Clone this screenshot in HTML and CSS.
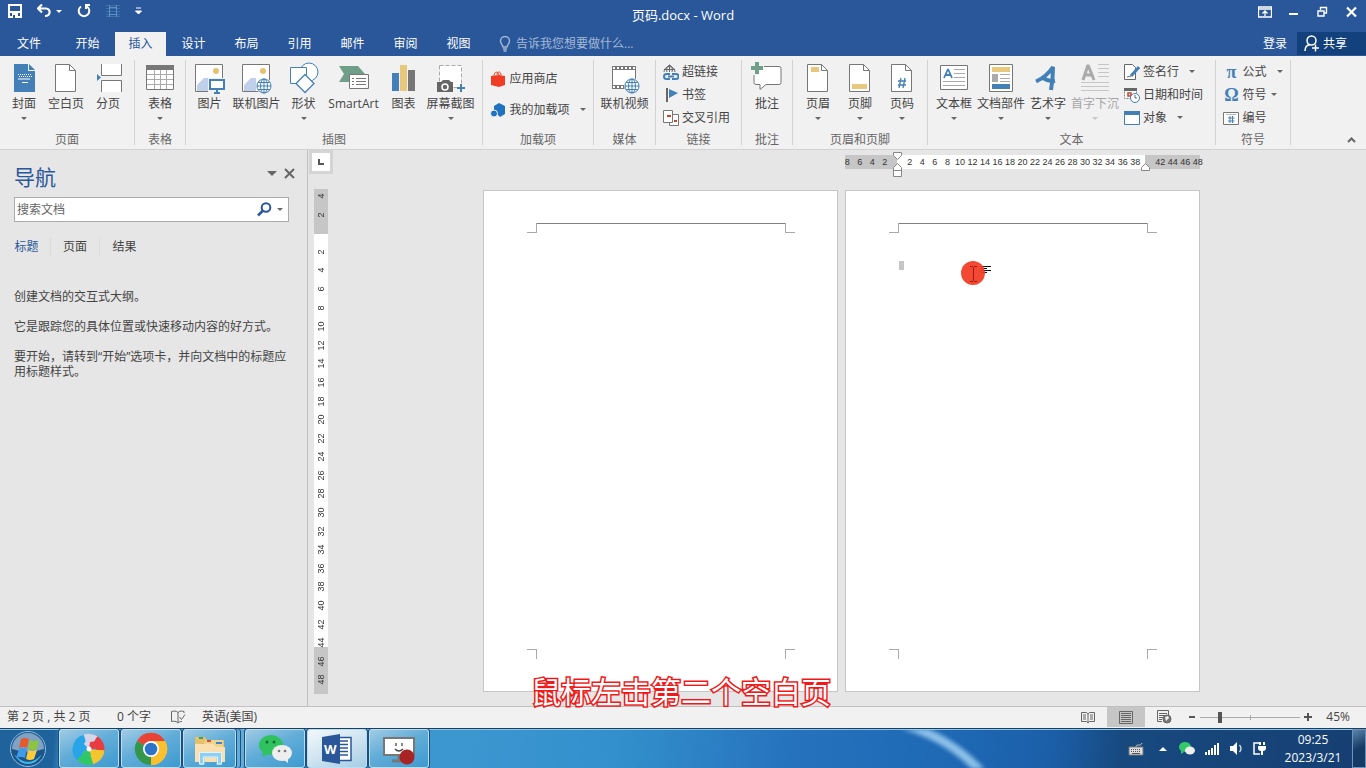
FILE: index.html
```html
<!DOCTYPE html>
<html lang="zh-CN">
<head>
    <meta charset="UTF-8">
    <meta name="viewport" content="width=device-width, initial-scale=1.0">
    <title>页码.docx - Word</title>
    <link rel="stylesheet" href="styles.css">
</head>
<body>
    <header class="titlebar">
        <div class="quick">
            <button aria-label="保存"><svg width="14" height="14" viewBox="0 0 14 14"><path d="M1 1h12v12H1zM1 8h12" fill="none" stroke="#fff" stroke-width="2"/><path d="M4 9h6v5H4z" fill="#fff"/><path d="M5 11h2v3H5z" fill="#2a579a"/></svg></button>
            <button class="undo" aria-label="撤消"><svg width="14" height="14" viewBox="0 0 14 14"><path d="M1 4.500h8c5 0 5 7.500-1 7.500M5 .5l-4 4 4 4" fill="none" stroke="#fff" stroke-width="2.200"/></svg><i class="caret"></i></button>
            <button aria-label="恢复"><svg width="14" height="14" viewBox="0 0 14 14"><path d="M4 2.500a5.300 5.300 0 1 0 6 0M8 1h5M9 0v5" fill="none" stroke="#fff" stroke-width="2"/></svg></button>
            <button aria-label="表格"><svg width="14" height="14" viewBox="0 0 14 14"><path d="M0 1.500h14M0 12.500h14M0 4.500h14M0 7.500h14M0 10.500h14" fill="none" stroke="#3f70a8"/><path d="M3.500 1v12M10.500 1v12M3 3.500h8M3 10.500h8" fill="none" stroke="#5c94c4"/></svg></button>
            <button aria-label="自定义"><svg width="7" height="8" viewBox="0 0 7 8"><path d="M1 1h5M.5 4h6l-3 3z" fill="#fff" stroke="#fff" stroke-width="1"/></svg></button>
        </div>
        <h1>页码.docx - Word</h1>
        <div class="win-buttons">
            <button aria-label="功能区显示选项"><svg width="14" height="12" viewBox="0 0 14 12"><path d="M.5 1h13v10H.5zM1 3h12M7 10V5M4.500 7.500L7 5l2.500 2.500" fill="none" stroke="#fff" stroke-width="1.300"/></svg></button>
            <button aria-label="最小化"><svg width="10" height="12" viewBox="0 0 10 12"><path d="M0 7h9v2H0z" fill="#fff"/></svg></button>
            <button aria-label="还原"><svg width="11" height="12" viewBox="0 0 11 12"><path d="M3.500 4V1.500h6V7H7M1 5h6v5H1z" fill="none" stroke="#fff" stroke-width="1.400"/></svg></button>
            <button aria-label="关闭"><svg width="11" height="12" viewBox="0 0 11 12"><path d="M1 1.500l9 9M10 1.500l-9 9" stroke="#fff" stroke-width="2.200"/></svg></button>
        </div>
    </header>

    <nav class="tabs">
        <button class="file">文件</button>
        <button>开始</button>
        <button class="active">插入</button>
        <button>设计</button>
        <button>布局</button>
        <button>引用</button>
        <button>邮件</button>
        <button>审阅</button>
        <button>视图</button>
        <label class="tell-me">
            <svg width="12" height="16" viewBox="0 0 12 16"><path d="M4 11C4 9 1.500 8 1.500 5a4.500 4.500 0 0 1 9 0C10.500 8 8 9 8 11zM4 13h4M4.500 15h3" fill="none" stroke="#a5b9d6" stroke-width="1.400"/></svg>
            <input type="text" placeholder="告诉我您想要做什么..." aria-label="告诉我您想要做什么">
        </label>
        <button class="login">登录</button>
        <button class="share"><svg width="16" height="17" viewBox="0 0 16 17"><circle cx="7.500" cy="5.500" r="4.500" fill="none" stroke="#fff" stroke-width="1.500"/><path d="M1 16c0-4 2-6 5-6.500M8 13h7M11.500 9.500v7" fill="none" stroke="#fff" stroke-width="1.500"/></svg>共享</button>
    </nav>

    <section class="ribbon">
        <div class="group group-pages">
            <div class="items">
                <button class="big"><svg viewBox="0 0 32 32"><path d="M6 2h14v7h7v21H6z" fill="#4480b8"/><path d="M21 2l6 6h-6z" fill="#4480b8"/><path d="M10 12.500h13M11 14.500h13" stroke="#fff" stroke-dasharray="1 1"/><path d="M10 17h12M14 20.500h6" stroke="#fff"/></svg><span>封面</span><i class="caret"></i></button>
                <button class="big"><svg viewBox="0 0 32 32"><path d="M5.500 2.500h14l6 6v21h-20z" fill="#fff" stroke="#777"/><path d="M19.500 2.500v6h6" fill="none" stroke="#777"/></svg><span>空白页</span></button>
                <button class="big"><svg viewBox="0 0 32 32"><path d="M10 2h20v11H10zM10 19h20v11H10z" fill="#fff"/><path d="M9.500 2v11.500h20V2M9.500 30V18.500h20V30" fill="none" stroke="#777"/><path d="M5 12v7l4-3.500z" fill="#4480b8"/></svg><span>分页</span></button>
            </div>
            <h2>页面</h2>
        </div>
        <div class="group group-small">
            <div class="items">
                <button class="big"><svg viewBox="0 0 32 32"><path d="M2.500 3.500h27v24h-27z" fill="#fff" stroke="#777"/><path d="M2 3h28v5H2z" fill="#777"/><path d="M3 12.500h26M3 17.500h26M3 22.500h26M10.500 8v19M16.500 8v19M22.500 8v19" stroke="#aaa"/></svg><span>表格</span><i class="caret"></i></button>
            </div>
            <h2>表格</h2>
        </div>
        <div class="group group-art">
            <div class="items">
                <button class="big"><svg viewBox="0 0 32 32"><path d="M2.500 2.500h27v27h-27z" fill="#fff" stroke="#777"/><circle cx="23" cy="9" r="3" fill="#e8c070"/><path d="M4 29v-6l7-7h4v13z" fill="#c0d0ea"/><path d="M15 16h17v16H15z" fill="#f1f1f1"/><path d="M17 18h14v9H17zM21 31h6M24 27v3" fill="#fff" stroke="#4480b8" stroke-width="2"/></svg><span>图片</span></button>
                <button class="big"><svg viewBox="0 0 32 32"><path d="M2.500 2.500h27v27h-27z" fill="#fff" stroke="#777"/><circle cx="23" cy="9" r="3" fill="#e8c070"/><path d="M4 29v-6l7-7h5v13z" fill="#c0d0ea"/><circle cx="24" cy="24" r="8" fill="#f1f1f1"/><g fill="none" stroke="#4480b8"><circle cx="24" cy="24" r="7" fill="#fff"/><path d="M17 24h14M24 17v14M18 20.500h12M18 27.500h12"/><ellipse cx="24" cy="24" rx="3.500" ry="7"/></g></svg><span>联机图片</span></button>
                <button class="big"><svg viewBox="0 0 32 32"><circle cx="21" cy="10" r="9" fill="#fff" stroke="#4480b8"/><path d="M2.500 5.500h16v16h-16z" fill="#fff" stroke="#4480b8"/><path d="M17 12.500l9 9-9 9-9-9z" fill="#fff" stroke="#4480b8" stroke-width="1.300"/></svg><span>形状</span><i class="caret"></i></button>
                <button class="big wide"><svg viewBox="0 0 32 32"><path d="M1 4h19l7 8-7 8H1l5-8z" fill="#6f9f88"/><path d="M11.500 12.500h19v14h-19z" fill="#fff" stroke="#777"/><path d="M14 16.500h2M18 16.500h10M14 19.500h2M18 19.500h10M14 22.500h2M18 22.500h10" stroke="#777"/></svg><span>SmartArt</span></button>
                <button class="big"><svg viewBox="0 0 32 32"><path d="M4 11h7v18H4z" fill="#4480b8"/><path d="M12 3h7v26h-7z" fill="#e8c87c"/><path d="M20 8h7v21h-7z" fill="#777"/></svg><span>图表</span></button>
                <button class="big"><svg viewBox="0 0 32 32"><path d="M4.500 3.500h22v22h-22z" fill="#fff" stroke="#aaa" stroke-dasharray="4 2"/><path d="M2 20h4l2-2h6l2 2h2v10H2z" fill="#666"/><circle cx="10" cy="25" r="3" fill="#666" stroke="#fff" stroke-width="1.500"/><path d="M22 26h8M26 22v8" stroke="#4480b8" stroke-width="2"/></svg><span>屏幕截图</span><i class="caret"></i></button>
            </div>
            <h2>插图</h2>
        </div>
        <div class="group group-addins">
            <div class="items">
                <div class="rows tall">
                    <button><svg viewBox="0 0 16 16"><path d="M1 5l8-1 6 1v9l-6 2-8-2z" fill="#ef3e23"/><path d="M4 5c0-5 4-5 5-1M7 4c0-4 4-4 4 0" fill="none" stroke="#ef3e23"/></svg>应用商店</button>
                    <button><svg viewBox="0 0 16 16"><path d="M4 4l5-3 6 3v8l-5 3-2-2-4-4z" fill="#1e72bf"/><circle cx="4" cy="11.500" r="3.500" fill="#1e72bf" stroke="#f1f1f1"/></svg>我的加载项<i class="caret far"></i></button>
                </div>
            </div>
            <h2>加载项</h2>
        </div>
        <div class="group group-media">
            <div class="items">
                <button class="big"><svg viewBox="0 0 32 32"><path d="M4 4h24v23H4z" fill="#777"/><path d="M5 8h22v15H5z" fill="#fff"/><path d="M5 6h22M5 25h22" stroke="#fff" stroke-width="2" stroke-dasharray="2 2"/><circle cx="24" cy="24" r="8" fill="#f1f1f1"/><g fill="none" stroke="#4480b8"><circle cx="24" cy="24" r="7" fill="#fff"/><path d="M17 24h14M24 17v14M18 20.500h12M18 27.500h12"/><ellipse cx="24" cy="24" rx="3.500" ry="7"/></g></svg><span>联机视频</span></button>
            </div>
            <h2>媒体</h2>
        </div>
        <div class="group group-links">
            <div class="items">
                <div class="rows">
                    <button><svg viewBox="0 0 16 16"><g fill="none" stroke="#666"><path d="M1 8a5.500 5.500 0 1 1 11 0M1 5.500h11M6.500 1v7M4 8c-1-3 0-6 2.500-7C9 2 10 5 9 8"/></g><path d="M7 10H3.500a2.500 2.500 0 0 0 0 5H7M9 10h4a2.500 2.500 0 0 1 0 5H9M5 12.500h6" fill="none" stroke="#4480b8" stroke-width="2"/></svg>超链接</button>
                    <button><svg viewBox="0 0 16 16"><path d="M4 1v14" stroke="#666" stroke-width="2"/><path d="M6 2l9 4-9 5z" fill="#4480b8"/></svg>书签</button>
                    <button><svg viewBox="0 0 16 16"><path d="M6.500 4.500h9v11h-9z" fill="#fff" stroke="#777"/><path d="M.5.5h9v12h-9z" fill="#fff" stroke="#777"/><path d="M4 6h4M11 11h3" stroke="#d0402b" stroke-width="2"/></svg>交叉引用</button>
                </div>
            </div>
            <h2>链接</h2>
        </div>
        <div class="group group-small">
            <div class="items">
                <button class="big"><svg viewBox="0 0 32 32"><path d="M5 4.500h23q2 0 2 2v14q0 2-2 2H15l-6 5v-5H5q-2 0-2-2v-14q0-2 2-2z" fill="#fff" stroke="#777"/><path d="M0 0h13v8H8v5H0z" fill="#f1f1f1"/><path d="M0 6h12M6 0v12" stroke="#6f9f88" stroke-width="4"/></svg><span>批注</span></button>
            </div>
            <h2>批注</h2>
        </div>
        <div class="group group-header">
            <div class="items">
                <button class="big"><svg viewBox="0 0 32 32"><path d="M5.500 2.500h14l6 6v21h-20z" fill="#fff" stroke="#777"/><path d="M19.500 2.500v6h6" fill="none" stroke="#777"/><path d="M9 5h8v5H9z" fill="#e8c87c"/></svg><span>页眉</span><i class="caret"></i></button>
                <button class="big"><svg viewBox="0 0 32 32"><path d="M5.500 2.500h14l6 6v21h-20z" fill="#fff" stroke="#777"/><path d="M19.500 2.500v6h6" fill="none" stroke="#777"/><path d="M8 22h15v5H8z" fill="#e8c87c"/></svg><span>页脚</span><i class="caret"></i></button>
                <button class="big"><svg viewBox="0 0 32 32"><path d="M5.500 2.500h14l6 6v21h-20z" fill="#fff" stroke="#777"/><path d="M19.500 2.500v6h6" fill="none" stroke="#777"/><path d="M15 16l-2 10M19 16l-2 10M12 19h8M12 23h8" stroke="#4480b8" stroke-width="1.300"/></svg><span>页码</span><i class="caret"></i></button>
            </div>
            <h2>页眉和页脚</h2>
        </div>
        <div class="group group-text">
            <div class="items">
                <button class="big"><svg viewBox="0 0 32 32"><path d="M2.500 3.500h27v24h-27z" fill="#fff" stroke="#777"/><path d="M6 16l4-9 4 9M7.500 13h5" fill="none" stroke="#4480b8" stroke-width="1.800" stroke-linejoin="bevel"/><path d="M16 7.500h11M16 11.500h11M16 15.500h11M5 19.500h22M5 23.500h22" stroke="#aaa"/></svg><span>文本框</span><i class="caret"></i></button>
                <button class="big"><svg viewBox="0 0 32 32"><path d="M4.500 2.500h23v27h-23z" fill="#fff" stroke="#777"/><path d="M7 5h18v5H7z" fill="#e8c87c"/><path d="M7 12h6v8H7z" fill="#aaa"/><path d="M15 12.500h10M15 16.500h10M15 19.500h10" stroke="#aaa"/><path d="M7 22h18v5H7z" fill="#4480b8"/></svg><span>文档部件</span><i class="caret"></i></button>
                <button class="big"><svg viewBox="0 0 32 32"><path d="M4 19.500C12 16 17 11 21 5q0 12-2 23M11 16q6 4 12 3" fill="none" stroke="#4480b8" stroke-width="4" stroke-linejoin="bevel"/></svg><span>艺术字</span><i class="caret"></i></button>
                <button class="big" disabled><svg viewBox="0 0 32 32"><path d="M4 18L9 3l6 15M6 13h7" fill="none" stroke="#aaa" stroke-width="3" stroke-linejoin="bevel"/><path d="M19 2.500h11M19 6.500h11M19 10.500h11M19 14.500h11M2 20.500h28M2 24.500h28M2 28.500h28" stroke="#c6c6c6"/></svg><span>首字下沉</span><i class="caret"></i></button>
                <div class="rows">
                    <button><svg viewBox="0 0 16 16"><path d="M.5.5h8l3 3v12H.5z" fill="#fff" stroke="#666"/><path d="M15 3l-8 9" stroke="#4480b8" stroke-width="3"/><path d="M3 13l4-1" stroke="#666"/></svg>签名行<i class="caret far"></i></button>
                    <button><svg viewBox="0 0 16 16"><path d="M.5 1.500h12v10H.5z" fill="#fff" stroke="#888" stroke-dasharray="2 1"/><path d="M0 1h13v3H0z" fill="#666"/><path d="M4 6h3v3H4z" fill="none" stroke="#d0402b" stroke-width="1.500"/><circle cx="11" cy="11" r="4.500" fill="#fff" stroke="#4480b8"/><path d="M11 8v3h2" fill="none" stroke="#666"/></svg>日期和时间</button>
                    <button><svg viewBox="0 0 16 16"><path d="M.5 1.500h15v13H.5z" fill="#fff" stroke="#4480b8"/><path d="M0 1h16v4H0z" fill="#4480b8"/></svg>对象<i class="caret far"></i></button>
                </div>
            </div>
            <h2>文本</h2>
        </div>
        <div class="group group-symbols">
            <div class="items">
                <div class="rows">
                    <button><b class="greek">π</b>公式<i class="caret far"></i></button>
                    <button><b class="greek">Ω</b>符号<i class="caret"></i></button>
                    <button><svg viewBox="0 0 16 16"><path d="M.5 2.500h15v12H.5z" fill="#fff" stroke="#777"/><path d="M3 4.500h10" stroke="#bbb"/><path d="M7 6v7M9.500 6v7M5 8h6.500M5 11h6.500" stroke="#4480b8"/></svg>编号</button>
                </div>
            </div>
            <h2>符号</h2>
        </div>
        <button class="collapse" aria-label="折叠功能区"><svg width="9" height="6" viewBox="0 0 9 6"><path d="M1 5l3.500-3.500L8 5" fill="none" stroke="#666" stroke-width="2"/></svg></button>
    </section>

    <main class="workspace">
        <aside class="nav-pane">
            <div class="nav-title">
                <h2>导航</h2>
                <button aria-label="任务窗格选项"><i class="caret large"></i></button>
                <button aria-label="关闭"><svg width="11" height="11" viewBox="0 0 11 11"><path d="M1 1l9 9M10 1l-9 9" stroke="#666" stroke-width="2"/></svg></button>
            </div>
            <div class="search">
                <input type="text" placeholder="搜索文档" aria-label="搜索文档">
                <button aria-label="搜索"><svg width="15" height="15" viewBox="0 0 15 15"><circle cx="9" cy="5.500" r="4.300" fill="none" stroke="#2a579a" stroke-width="2"/><path d="M6 8.500l-5 5" stroke="#2a579a" stroke-width="2.500"/></svg></button>
                <button aria-label="搜索选项"><i class="caret"></i></button>
            </div>
            <div class="nav-tabs">
                <button class="active">标题</button>
                <button>页面</button>
                <button>结果</button>
            </div>
            <div class="nav-help">
                <p>创建文档的交互式大纲。</p>
                <p>它是跟踪您的具体位置或快速移动内容的好方式。</p>
                <p>要开始，请转到“开始”选项卡，并向文档中的标题应用标题样式。</p>
            </div>
        </aside>

        <div class="side">
            <button class="tab-stop" aria-label="制表符"><svg width="6" height="6" viewBox="0 0 6 6"><path d="M1 0v5h5" fill="none" stroke="#555" stroke-width="2"/></svg></button>
            <div class="ruler-v"><div class="marks" id="marksV"></div></div>
        </div>

        <div class="canvas">
            <div class="ruler-h">
                <div class="marks" id="marksH"></div>
                <svg class="indent left" width="9" height="25" viewBox="0 0 9 25"><path d="M.5.5h8v3l-4 4-4-4zM.5 24.500v-9l4-4 4 4v9zM.5 18.500h8" fill="#fff" stroke="#888"/></svg>
                <svg class="indent right" width="9" height="8" viewBox="0 0 9 8"><path d="M.5 7.500v-3l4-4 4 4v3z" fill="#fff" stroke="#888"/></svg>
            </div>
            <article class="page">
                <div class="page-top"><i></i><hr><i></i></div>
                <div class="page-bottom"><i></i><i></i></div>
            </article>
            <article class="page">
                <div class="page-top"><i></i><hr><i></i></div>
                <div class="page-body"><span class="selection"></span></div>
                <div class="page-bottom"><i></i><i></i></div>
                <svg class="pointer" width="31" height="24" viewBox="0 0 31 24"><path d="M20 5.500h10M20 7.500h6M20 9.500h10M20 11.500h6" stroke="#111"/><circle cx="12" cy="12" r="12" fill="#f23a22" fill-opacity=".93"/><path d="M9 5.500h3M13 5.500h3M12.500 6v14M9 20.500h3M13 20.500h3" stroke="#a01c14"/></svg>
            </article>
        </div>
    </main>

    <footer class="status">
        <span class="page-count">第 2 页 , 共 2 页</span>
        <span>0 个字</span>
        <svg class="proofing" width="15" height="14" viewBox="0 0 15 14"><path d="M7 2.500C5 .5 3 1 .5 1.500v10c2.500-.5 4.500-.5 6.500 1.500zM7 2.500C9 .5 11 1 13 1.500V3M7 13c1-1 2-1.500 4-1.500M8.500 7l2 2.500 3.500-5" fill="none" stroke="#666"/></svg>
        <span>英语(美国)</span>
        <div class="views">
            <button aria-label="阅读视图"><svg width="14" height="13" viewBox="0 0 14 13"><path d="M.5 1.500h5L7 3l1.500-1.500h5v9h-5L7 12l-1.500-1.500h-5zM7 3v9M2 4h3M2 6h3M2 8h3M9 4h3M9 6h3M9 8h3" fill="none" stroke="#666"/></svg></button>
            <button class="active" aria-label="页面视图"><svg width="14" height="13" viewBox="0 0 14 13"><path d="M.5.5h13v12H.5zM2 2.500h10M2 4.500h10M2 6.500h10M2 8.500h10M2 10.500h10" fill="none" stroke="#666"/></svg></button>
            <button aria-label="Web 版式视图"><svg width="15" height="14" viewBox="0 0 15 14"><path d="M5 11.500H.5V.5h11V5M2 3.500h8M2 5.500h6M2 7.500h4M2 9.500h3" fill="none" stroke="#666"/><circle cx="10" cy="9" r="4" fill="#777" stroke="#666"/><path d="M8 7l3-1 1 2-3 3z" fill="#f1f1f1"/></svg></button>
        </div>
        <div class="zoom">
            <button aria-label="缩小"><svg width="8" height="8" viewBox="0 0 8 8"><path d="M1 4h6" stroke="#555" stroke-width="2"/></svg></button>
            <input type="range" min="0" max="100" value="18" aria-label="缩放">
            <button aria-label="放大"><svg width="8" height="8" viewBox="0 0 8 8"><path d="M0 4h8M4 0v8" stroke="#555" stroke-width="2"/></svg></button>
        </div>
        <button class="percent">45%</button>
    </footer>

    <div class="taskbar">
        <svg class="streak" width="90" height="40" viewBox="0 0 90 40"><path d="M-8-6Q45 4 84 48" fill="none" stroke="#9fd0f2" stroke-width="9" opacity=".85"/></svg>
        <button class="start" aria-label="开始"><svg width="38" height="38" viewBox="0 0 38 38"><circle cx="19" cy="19" r="17.500" fill="#1d5488" stroke="#8fbde0"/><path d="M3 19a16 16 0 0 1 32 0q-16 5-32 0z" fill="#7fa3c4"/><path d="M5 24q14 16 28 0-5 10-14 10T5 24z" fill="#3fb8ee"/><path d="M12 9q4-2 8 0l-2 9q-4-2-8 0z" fill="#e8582b"/><path d="M21 10q4 2 9 0l-2 9q-4 2-9 0z" fill="#8cc63e"/><path d="M10 19q4-2 8 0l-2 9q-4-2-9 0z" fill="#3f9bea"/><path d="M19 20q4 2 9 0l-3 9q-4 2-8 0z" fill="#fccb3a"/></svg></button>
        <button class="task" aria-label="浏览器"><svg width="34" height="34" viewBox="0 0 34 34"><g fill="none" stroke-width="9"><path d="M11 8a11 11 0 0 1 13 1" stroke="#d5d5ea"/><path d="M23 8a11 11 0 0 1 5 11" stroke="#e83c40"/><path d="M28 18a11 11 0 0 1-9 10" stroke="#f3c52f"/><path d="M20 28a11 11 0 0 1-12-4" stroke="#32c766"/><path d="M8 25a11 11 0 0 1 5-18" stroke="#27a5e8"/></g><path d="M17 17q-1-6-7-6-4 4 0 9z" fill="#27a5e8"/><path d="M17 17q5-4 3-9-6-1-8 4z" fill="#d5d5ea"/><path d="M17 17q6 1 9-3-2-6-8-4z" fill="#e83c40"/><path d="M17 17q-1 6 4 9 5-3 3-8z" fill="#f3c52f"/><path d="M17 17q-5 1-7 6 5 4 9 0z" fill="#32c766"/><circle cx="17" cy="17" r="2.500" fill="#fff"/></svg></button>
        <button class="task" aria-label="Chrome"><svg width="34" height="34" viewBox="0 0 34 34"><path d="M17 17L3 9a16 16 0 0 1 28 0z" fill="#e94335"/><path d="M17 17h0L31 9a16 16 0 0 1-14 24z" fill="#fbbd2c"/><path d="M17 17v16A16 16 0 0 1 3 9z" fill="#34964a"/><path d="M17 9h14a16 16 0 0 1-14 24l7-12z" fill="#fbc02d"/><circle cx="17" cy="17" r="8" fill="#fff"/><circle cx="17" cy="17" r="6.300" fill="#2a75c8"/></svg></button>
        <button class="task folder" aria-label="资源管理器"><svg width="34" height="34" viewBox="0 0 34 34"><path d="M2 5h10l2 3h17v22H2z" fill="#e7c06d"/><path d="M12 8h18v22H10z" fill="#f0d48e"/><path d="M2 12h18l3 3h9v15H2z" fill="#fae0b0"/><path d="M6 6h4" stroke="#3aa64b" stroke-width="2"/><path d="M14 9h4" stroke="#d84b32" stroke-width="2"/><path d="M23 11h6" stroke="#3787d8" stroke-width="2"/><path d="M9 33V23h17v10" fill="none" stroke="#8fd0f0" stroke-width="5"/><path d="M6.500 32V20.500h22V32h-4v-7h-14v7z" fill="none" stroke="#e0f4ff"/></svg></button>
        <button class="task" aria-label="微信"><svg width="34" height="34" viewBox="0 0 34 34"><ellipse cx="13" cy="13" rx="12" ry="10" fill="#30c25e"/><path d="M5 20l-1 5 6-3z" fill="#30c25e"/><circle cx="9" cy="10" r="1.500" fill="#186a35"/><circle cx="16" cy="10" r="1.500" fill="#186a35"/><ellipse cx="24" cy="21" rx="10" ry="8" fill="#eee"/><path d="M26 28l4 3v-5z" fill="#eee"/><circle cx="21" cy="19" r="1.300" fill="#777"/><circle cx="27" cy="19" r="1.300" fill="#777"/></svg></button>
        <button class="task current" aria-label="Word"><svg width="34" height="34" viewBox="0 0 34 34"><path d="M17 5.500h14v23H17z" fill="#fff" stroke="#2a579a" stroke-width="1.500"/><path d="M19 9h9M19 12.500h9M19 16h9M19 19.500h9M19 23h9" stroke="#2a579a" stroke-width="1.500"/><path d="M2 5l18-3v30L2 29z" fill="#2a579a"/><text x="4" y="22" class="word-letter">W</text></svg></button>
        <button class="task" aria-label="录屏"><svg width="34" height="34" viewBox="0 0 34 34"><path d="M2 6h30v17H2z" fill="#fff" stroke="#777" stroke-width="2"/><path d="M10 29h16M17 24v5" stroke="#777" stroke-width="3"/><path d="M14 11v3M20 11v3M13 17q4 4 8 0" fill="none" stroke="#444" stroke-width="1.300"/><circle cx="25" cy="25" r="7.500" fill="#a82424"/></svg></button>
        <div class="tray">
            <svg width="16" height="15" viewBox="0 0 16 15"><path d="M8 6c0-4 5 0 6-4" fill="none" stroke="#ccc"/><path d="M1 6h14v8H1z" fill="#ddd" stroke="#777"/><path d="M3 8.500h10M3 10.500h10" stroke="#555" stroke-dasharray="1 1"/><path d="M4 12.500h8" stroke="#555"/></svg>
            <svg width="8" height="15" viewBox="0 0 8 15"><path d="M0 10l4-4 4 4z" fill="#fff"/></svg>
            <svg width="16" height="15" viewBox="0 0 16 15"><ellipse cx="6" cy="6" rx="6" ry="5" fill="#35c868"/><path d="M2 9v4l3-2z" fill="#35c868"/><ellipse cx="11" cy="9.500" rx="5" ry="4" fill="#eee"/></svg>
            <svg width="16" height="15" viewBox="0 0 16 15"><path d="M1 11h2v3H1zM4 9h2v5H4zM7 7h2v7H7zM10 4h2v10h-2zM13 2h2v12h-2z" fill="#fff"/></svg>
            <svg width="14" height="15" viewBox="0 0 14 15"><path d="M1 5h3l4-4v13l-4-4H1z" fill="#fff"/><path d="M10.500 4q3 3.500 0 7" fill="none" stroke="#dde" stroke-width="1.300"/></svg>
            <svg width="14" height="15" viewBox="0 0 14 15"><path d="M7 2H2v11h6" fill="none" stroke="#fff" stroke-width="1.500"/><path d="M6 5h8v2q0 3-3 3v4H9v-4Q6 10 6 7zM7 1h2v3H7zM11 1h2v3h-2z" fill="#fff"/></svg>
        </div>
        <time class="clock" datetime="2023-03-21T09:25"><span>09:25</span><span>2023/3/21</span></time>
        <button class="desktop" aria-label="显示桌面"></button>
    </div>

    <p class="subtitle">鼠标左击第二个空白页</p>

    <script>
        // one slot per step of 2, the slots at 0 and 40 hold the indent handles
        function fillRuler(id, from, to, hidden) {
            const box = document.getElementById(id);
            for (let n = from; n <= to; n += 2) {
                const mark = document.createElement('span');
                mark.textContent = hidden.includes(n) ? '' : Math.abs(n);
                box.appendChild(mark);
            }
        }

        fillRuler('marksH', -8, 48, [0, 40]);
        fillRuler('marksV', -4, 48, [0]);
    </script>
</body>
</html>
```
FILE: styles.css
```css
* {
    box-sizing: border-box;
}
body {
    margin: 0;
    height: 100vh;
    display: flex;
    flex-direction: column;
    overflow: hidden;
    position: relative;
    background: #e6e6e6;
    color: #444;
    font-family: "Open Sans", "Noto Sans CJK SC", sans-serif;
    font-size: 12px;
    line-height: 16px;
}
button, input {
    font: inherit;
    color: inherit;
    background: none;
    border: 0;
    padding: 0;
    margin: 0;
    outline: 0;
}
button {
    display: flex;
    align-items: center;
    justify-content: center;
    white-space: nowrap;
}
h1, h2, p {
    margin: 0;
    font-size: 12px;
    font-weight: normal;
}
svg {
    flex: none;
    display: block;
}
.caret {
    border: 3px solid transparent;
    border-top-color: #666;
    border-bottom: 0;
}
.caret.large {
    border-width: 5px 5px 0;
}

/* title bar */
.titlebar {
    height: 32px;
    background: #2a579a;
    color: #fff;
    display: grid;
    grid-template-columns: 1fr auto 1fr;
}
.titlebar h1 {
    font-size: 13px;
    line-height: 31px;
}
.quick {
    display: flex;
    align-items: center;
    gap: 15px;
    height: 22px;
    padding-left: 8px;
}
.undo {
    gap: 5px;
}
.undo .caret {
    border-top-color: #fff;
}
.win-buttons {
    display: flex;
    justify-content: flex-end;
    height: 23px;
}
.win-buttons button {
    width: 29px;
}

/* tabs */
.tabs {
    display: flex;
    height: 24px;
    background: #2a579a;
    color: #fff;
}
.tabs button {
    width: 51px;
    margin: 0 1px;
}
.tabs .file {
    width: 58px;
    margin: 0 3px 0 0;
}
.tabs .active {
    background: #f1f1f1;
    color: #2a579a;
}
.tell-me {
    flex: 1;
    display: flex;
    align-items: center;
    gap: 5px;
    padding-left: 14px;
}
.tell-me input {
    width: 200px;
}
.tell-me input::placeholder {
    color: #a5b9d6;
    opacity: 1;
}
.tabs .login {
    width: 42px;
}
.tabs .share {
    width: 69px;
    margin: 0 0 1px;
    padding-right: 12px;
    gap: 3px;
    background: #12417b;
}

/* ribbon */
.ribbon {
    display: flex;
    height: 94px;
    padding: 4px 0 4px;
    background: #f1f1f1;
    border-bottom: 1px solid #d2d2d2;
}
.group {
    display: flex;
    flex-direction: column;
    border-right: 1px solid #d2d2d2;
}
.group h2 {
    padding-top: 4px;
    line-height: 10px;
    text-align: center;
    color: #666;
}
.group-pages, .group-header {
    min-width: 135px;
}
.group-small {
    min-width: 51px;
}
.group-art {
    min-width: 297px;
}
.group-addins {
    min-width: 111px;
}
.group-media {
    min-width: 62px;
}
.group-links {
    min-width: 86px;
}
.group-text {
    min-width: 288px;
}
.group-symbols {
    min-width: 75px;
}
.items {
    flex: 1;
    display: flex;
    justify-content: center;
    gap: 7px;
}
.group-pages .items {
    gap: 8px;
    padding-right: 2px;
}
.group-header .items {
    gap: 10px;
}
.group-text .items {
    gap: 5px;
    padding-right: 4px;
}
.group-links .items {
    padding-right: 4px;
}
.big {
    flex-direction: column;
    justify-content: flex-start;
    min-width: 32px;
    padding-top: 2px;
}
.big.wide {
    min-width: 54px;
}
.big svg {
    width: 32px;
    height: 32px;
}
.big span {
    margin-top: 2px;
}
.big .caret {
    margin-top: 5px;
}
.big:disabled {
    color: #a6a6a6;
}
.big:disabled .caret {
    border-top-color: #c6c6c6;
}
.rows button {
    height: 23px;
    gap: 3px;
}
.rows.tall {
    padding-top: 3px;
}
.rows.tall button {
    height: 31px;
}
.rows svg {
    width: 16px;
    height: 16px;
}
.rows .caret {
    margin-left: 1px;
}
.rows .caret.far {
    margin-left: 7px;
}
.greek {
    width: 16px;
    text-align: center;
    color: #4480b8;
    font: bold 18px/20px "Liberation Serif", serif;
}
.collapse {
    margin-left: auto;
    align-self: flex-end;
    width: 30px;
    height: 10px;
}

/* workspace */
.workspace {
    flex: 1;
    display: flex;
    min-height: 0;
}
.nav-pane {
    width: 308px;
    padding: 15px 18px 0 14px;
    border-right: 1px solid #c0c0c0;
}
.nav-title {
    display: flex;
    align-items: flex-start;
    gap: 7px;
    margin-right: -6px;
}
.nav-title h2 {
    flex: 1;
    font-size: 21px;
    line-height: 24px;
    color: #2a579a;
}
.nav-title button {
    height: 16px;
}
.search {
    display: flex;
    height: 25px;
    margin-top: 8px;
    background: #fff;
    border: 1px solid #ababab;
}
.search input {
    flex: 1;
    min-width: 0;
    padding-left: 2px;
}
.search input::placeholder {
    color: #666;
    opacity: 1;
}
.search button {
    padding-right: 5px;
}
.nav-tabs {
    display: flex;
    height: 20px;
    margin-top: 15px;
}
.nav-tabs button {
    width: 49px;
    border-right: 1px solid #dcdcdc;
}
.nav-tabs button:first-child {
    width: 37px;
    padding-right: 11px;
}
.nav-tabs button:last-child {
    border: 0;
}
.nav-tabs .active {
    color: #2a579a;
}
.nav-help {
    margin-top: 32px;
    line-height: 15px;
}
.nav-help p {
    margin-bottom: 15px;
}
.side {
    display: flex;
    flex-direction: column;
    align-items: center;
    width: 25px;
    padding-bottom: 12px;
}
.tab-stop {
    width: 24px;
    height: 24px;
    background: #fff;
    border: 3px solid #d4d4d4;
}
.ruler-v {
    flex: 1;
    width: 14px;
    margin-top: 15px;
    display: flex;
    background: linear-gradient(#c6c6c6 45px, #fff 45px calc(100% - 47px), #c6c6c6 0);
}
.marks {
    flex: 1;
    display: grid;
    color: #333;
    font-family: "Liberation Sans", sans-serif;
    font-size: 9px;
    line-height: 14px;
}
.marks span {
    display: flex;
    align-items: center;
    justify-content: center;
}
.ruler-v .marks {
    grid-auto-rows: 1fr;
    margin: -2px 0 5px;
}
.ruler-v span {
    writing-mode: vertical-rl;
    transform: rotate(180deg);
    min-height: 0;
}
.canvas {
    flex: 1;
    display: grid;
    grid-template-columns: 355px 355px;
    grid-template-rows: 36px 1fr;
    column-gap: 7px;
    row-gap: 4px;
    justify-content: center;
    padding: 0 16px 14px 0;
}
.ruler-h {
    grid-column: 2;
    position: relative;
    display: flex;
    height: 14px;
    margin-top: 5px;
    background: linear-gradient(90deg, #c6c6c6 52px, #fff 52px 300px, #c6c6c6 0);
}
.ruler-h .marks {
    grid-auto-flow: column;
    grid-auto-columns: minmax(0, 1fr);
    margin: 0 -4px;
}
.indent {
    position: absolute;
}
.indent.left {
    left: 48px;
    top: -3px;
}
.indent.right {
    left: 296px;
    top: 8px;
}
.page {
    position: relative;
    display: flex;
    flex-direction: column;
    padding: 32px 42px 32px 43px;
    background: #fff;
    border: 1px solid #c6c6c6;
}
.page-top, .page-bottom {
    display: flex;
    justify-content: space-between;
}
.page-top i, .page-bottom i {
    width: 10px;
    height: 10px;
    border: 0 solid #aaa;
}
.page-top i:first-child {
    border-width: 0 1px 1px 0;
}
.page-top i:last-child {
    border-width: 0 0 1px 1px;
}
.page-top hr {
    flex: 1;
    height: 1px;
    margin: 0;
    border: 0;
    background: #808080;
}
.page-bottom {
    margin-top: auto;
}
.page-bottom i:first-child {
    border-width: 1px 1px 0 0;
}
.page-bottom i:last-child {
    border-width: 1px 0 0 1px;
}
.page-body {
    padding: 28px 10px 0;
}
.selection {
    display: block;
    width: 5px;
    height: 9px;
    background: #c6c6c6;
}
.pointer {
    position: absolute;
    left: 115px;
    top: 70px;
}

/* status bar */
.status {
    display: flex;
    align-items: center;
    height: 22px;
    padding: 0 16px 1px 7px;
    gap: 20px;
    background: #f1f1f1;
    border-top: 1px solid #c0c0c0;
}
.page-count {
    min-width: 90px;
}
.proofing {
    margin-right: -4px;
}
.views {
    display: flex;
    align-self: stretch;
    margin-left: auto;
    margin-right: -15px;
}
.views button {
    width: 38px;
}
.views .active {
    background: #c6c6c6;
}
.zoom {
    display: flex;
    align-items: center;
    gap: 4px;
    margin-right: -6px;
}
.zoom input {
    appearance: none;
    width: 100px;
    height: 11px;
    background:
        linear-gradient(#aaa, #aaa) center / 1px 5px no-repeat,
        linear-gradient(#aaa, #aaa) center / 100% 1px no-repeat;
}
.zoom input::-webkit-slider-thumb {
    appearance: none;
    width: 4px;
    height: 11px;
    background: #555;
}

/* taskbar */
.taskbar {
    position: relative;
    display: flex;
    align-items: stretch;
    height: 40px;
    overflow: hidden;
    color: #fff;
    border-top: 1px solid #1c3f5e;
    box-shadow: inset 0 1px #8cc4e8;
    background: linear-gradient(95deg, #1f639c 0 4%, #3c96d0 5% 34%, #3390cc 45%, #2672bd 58%, #1e68b4 70%, #1b5fa8 77%, #17497f 82%, #163f73 100%);
}
.streak {
    position: absolute;
    left: 66%;
    top: 0;
    filter: blur(2px);
}
.start {
    width: 55px;
    margin-right: 4px;
}
.task {
    width: 60px;
    margin-right: 2px;
    border: 1px solid #b9def2;
    border-radius: 3px;
    box-shadow: 0 0 0 1px #1d4f7c;
    background: linear-gradient(155deg, #a0cbe4, #62add8 45%, #3e9ad0);
}
.folder {
    width: 53px;
    margin-right: 9px;
    box-shadow: 0 0 0 1px #1d4f7c, 4px 0 #62add8, 5px 0 #1d4f7c, 8px 0 #62add8;
}
.current {
    background: linear-gradient(155deg, #f2f8fc, #cfe4f0 50%, #a5cde4);
}
.word-letter {
    fill: #fff;
    font: bold 13px "Open Sans", sans-serif;
}
.tray {
    display: flex;
    align-items: center;
    gap: 9px;
    margin-left: auto;
}
.tray svg:first-child {
    margin-right: 6px;
}
.tray svg:nth-child(2) {
    margin-right: 3px;
}
.clock {
    display: flex;
    flex-direction: column;
    justify-content: center;
    width: 86px;
    padding-left: 8px;
    text-align: center;
    line-height: 18px;
}
.desktop {
    width: 14px;
    border: 1px solid #6c93b8;
    background: linear-gradient(155deg, #5a83aa, #163a66 50%);
}

/* caption over the document */
.subtitle {
    position: absolute;
    left: 0;
    right: 0;
    bottom: 56px;
    padding-right: 4px;
    text-align: center;
    font-size: 30px;
    line-height: 40px;
    color: #fff;
    -webkit-text-stroke: 3px #f01818;
    paint-order: stroke fill;
    pointer-events: none;
}
```
